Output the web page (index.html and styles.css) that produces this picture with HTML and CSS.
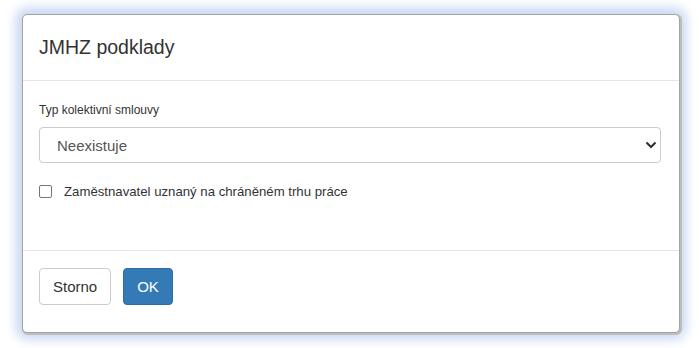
FILE: index.html
```html
<html>
<head>
  <meta charset="utf-8">
  <link rel="stylesheet" href="styles.css">
</head>
<body>
  <div class="modal">
    <div class="modal-header">
      <h4 class="modal-title">JMHZ podklady</h4>
    </div>
    <div class="modal-body">
      <label class="field-label" for="typ">Typ kolektivní smlouvy</label>
      <div class="select-wrap">
        <select id="typ" class="form-control">
          <option selected>Neexistuje</option>
        </select>
        <svg class="chevron" width="12" height="8" viewBox="0 0 12 8">
          <path d="M1.5 1.5 L6 6 L10.5 1.5" fill="none" stroke="#333" stroke-width="2.2"/>
        </svg>
      </div>
      <label class="check">
        <span class="box"></span>
        <span>Zaměstnavatel uznaný na chráněném trhu práce</span>
      </label>
    </div>
    <div class="modal-footer">
      <button class="btn btn-default">Storno</button>
      <button class="btn btn-primary">OK</button>
    </div>
  </div>
</body>
</html>
```

FILE: styles.css
```css
* { box-sizing: border-box; }
body {
  margin: 0;
  padding: 14px 19px 15px 22px;
  background: #fff;
  font-family: "Liberation Sans", Arial, sans-serif;
  color: #333;
}
.modal {
  height: 319px;
  background: #fff;
  border: 1px solid #a4a4a4;
  border-radius: 5px;
  box-shadow: 1px 1px 0 1px #bdbdbd, 0 0 12px 6px #c6d6f2;
  display: flex;
  flex-direction: column;
}
.modal-header {
  height: 66px;
  padding: 0 16px;
  display: flex;
  align-items: center;
  border-bottom: 1px solid #e5e5e5;
}
.modal-title {
  margin: 0;
  font-size: 19.5px;
  font-weight: normal;
  color: #333;
}
.modal-body {
  flex: 1;
  padding: 21px 16px 0 16px;
  border-bottom: 1px solid #e5e5e5;
}
.field-label {
  display: block;
  font-size: 12px;
  line-height: 16px;
  margin-bottom: 9px;
}
.select-wrap { position: relative; }
.form-control {
  width: 622px;
  height: 36px;
  padding: 0 17px;
  font-family: inherit;
  font-size: 15px;
  color: #555;
  background: #fff;
  border: 1px solid #ccc;
  border-radius: 4px;
  appearance: none;
  -webkit-appearance: none;
}
.chevron {
  position: absolute;
  right: 6px;
  top: 14px;
}
.check {
  display: flex;
  align-items: center;
  gap: 12px;
  margin-top: 21px;
  font-size: 13.2px;
}
.box {
  width: 13px;
  height: 13px;
  border: 1px solid #767676;
  border-radius: 2px;
}
.modal-footer {
  height: 81px;
  padding: 17px 16px 0 16px;
  display: flex;
  align-items: flex-start;
  gap: 12px;
}
.btn {
  height: 37px;
  padding: 0 13px;
  font-family: inherit;
  font-size: 15px;
  border-radius: 4px;
  border: 1px solid #ccc;
}
.btn-default { background: #fff; color: #333; }
.btn-primary {
  background: #337ab7;
  border-color: #2e6da4;
  color: #fff;
}
```
